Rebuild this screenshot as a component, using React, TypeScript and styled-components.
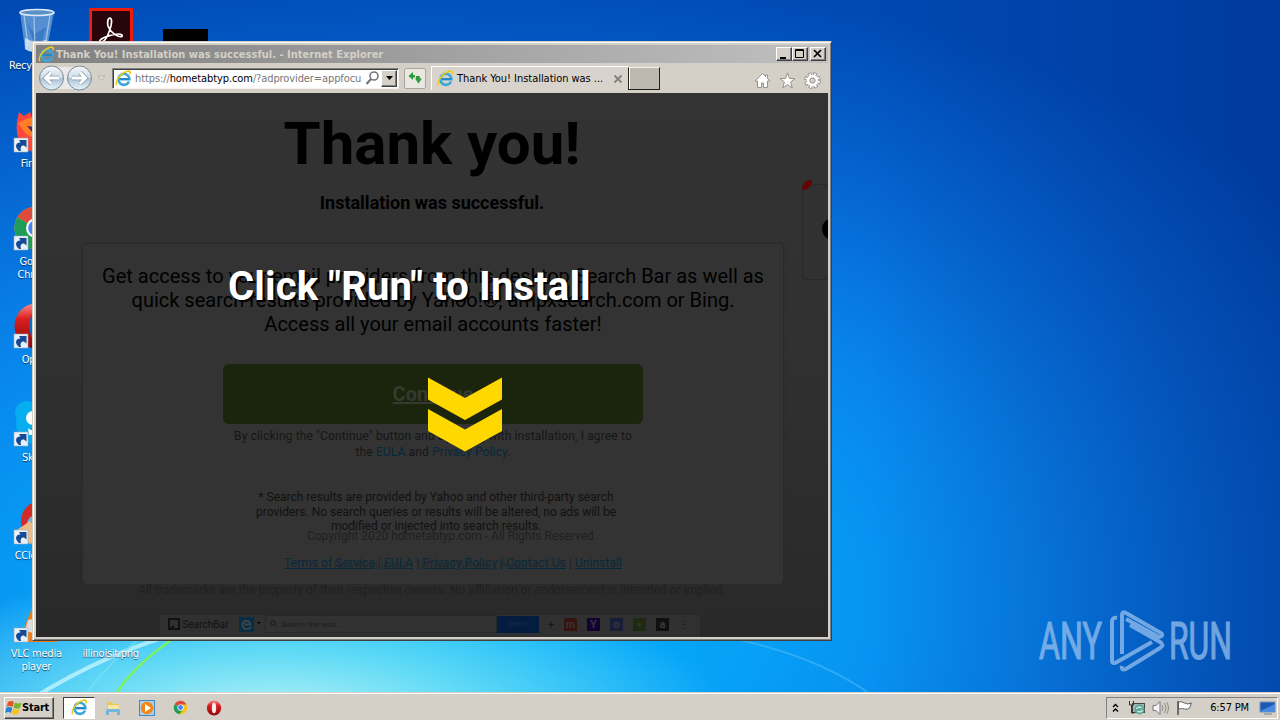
import React from 'react';
import styled, { createGlobalStyle } from 'styled-components';

const GlobalStyle = createGlobalStyle`
    * { box-sizing: border-box; }
    body { margin: 0; overflow: hidden; }
`;

const uiFont = '"DejaVu Sans Condensed", "DejaVu Sans", sans-serif';

const Desktop = styled.div`
    position: relative;
    display: flex;
    flex-direction: column;
    width: 1280px;
    height: 720px;
    overflow: hidden;
    font-family: ${uiFont};
    font-size: 11px;
    background:
        radial-gradient(ellipse 460px 150px at 270px 720px, rgba(200, 250, 245, 0.95) 0%, rgba(120, 230, 245, 0.8) 45%, rgba(0, 160, 250, 0) 100%),
        linear-gradient(90deg, rgba(0, 40, 130, 0) 68%, rgba(0, 40, 130, 0.2) 84%, rgba(0, 40, 130, 0.42) 100%),
        radial-gradient(ellipse 1150px 660px at 420px 600px, #00b4fc 0%, #06a2f8 28%, #0884ea 52%, #0564d0 74%, #0048b2 98%);
`;

const Wallpaper = styled.svg`
    position: absolute;
    left: 0;
    top: 0;
`;

const IconGrid = styled.div`
    position: relative;
    display: grid;
    flex: 1;
    grid-template-columns: repeat(3, 74.5px);
    grid-auto-rows: 98px;
    margin-left: -1px;
`;

const Shortcut = styled.div<{ col: number; row: number }>`
    grid-column: ${p => p.col};
    grid-row: ${p => p.row};
    display: flex;
    flex-direction: column;
    align-items: center;
    padding-top: 8px;
    color: #fff;
    line-height: 13px;
    letter-spacing: -0.25px;
    text-align: center;
    text-shadow: 0 1px 1px rgba(0, 20, 60, 0.7);
    svg { flex: none; margin-bottom: 3px; }
    span { width: 66px; }
`;

const Window = styled.div`
    position: absolute;
    left: 32px;
    top: 41px;
    width: 800px;
    height: 600px;
    display: flex;
    flex-direction: column;
    padding: 3px;
    background: #d4d0c8;
    border: 1px solid;
    border-color: #d4d0c8 #404040 #404040 #d4d0c8;
    box-shadow: inset 1px 1px #fff, inset -1px -1px #808080;
`;

const TitleBar = styled.div`
    display: flex;
    align-items: center;
    flex: none;
    height: 18px;
    padding: 0 2px;
    color: #d4d0c8;
    font-weight: bold;
    background: linear-gradient(90deg, #808080, #c0c0c0);
`;

const TitleText = styled.span`
    flex: 1;
    margin-left: 1px;
    font-size: 11px;
    letter-spacing: 0.02px;
    white-space: nowrap;
`;

const CaptionButton = styled.div<{ gap?: number }>`
    width: 16px;
    height: 14px;
    margin-left: ${p => p.gap || 0}px;
    background: #d4d0c8;
    border: 1px solid;
    border-color: #fff #404040 #404040 #fff;
    box-shadow: inset -1px -1px #808080;
    svg { display: block; }
`;

const NavBar = styled.div`
    display: flex;
    align-items: center;
    flex: none;
    height: 30px;
    padding: 0 7px 0 2px;
    background: #d4d0c8;
`;

const AddressBox = styled.div`
    display: flex;
    align-items: center;
    width: 287px;
    height: 21px;
    margin-left: 2px;
    padding: 1px 1px 1px 2px;
    background: #fff;
    border: 1px solid;
    border-color: #808080 #f4f2ee #f4f2ee #808080;
    box-shadow: inset 1px 1px #404040;
`;

const Address = styled.span`
    width: 230px;
    margin-left: 3px;
    color: #777;
    letter-spacing: -0.1px;
    white-space: nowrap;
    overflow: hidden;
    b { color: #000; font-weight: normal; }
`;

const DropButton = styled.div`
    display: flex;
    align-items: center;
    justify-content: center;
    width: 16px;
    height: 17px;
    margin-left: auto;
    background: #d4d0c8;
    border: 1px solid;
    border-color: #fff #404040 #404040 #fff;
    box-shadow: inset -1px -1px #808080;
`;

const RefreshButton = styled.div`
    display: flex;
    align-items: center;
    justify-content: center;
    width: 22px;
    height: 21px;
    margin-left: 5px;
    background: #e9e7e2;
    border: 1px solid #a9a69f;
    border-radius: 2px;
`;

const Tab = styled.div`
    display: flex;
    align-items: center;
    width: 197px;
    height: 24px;
    margin-left: 5px;
    padding-left: 5px;
    color: #000;
    border-left: 1px solid #fff;
    border-top: 1px solid #fff;
    background: #d8d4cd;
    span { flex: 1; margin-left: 3px; letter-spacing: -0.04px; white-space: nowrap; }
    svg:last-child { margin-right: 5px; }
`;

const NewTab = styled.div`
    width: 32px;
    height: 23px;
    margin-right: auto;
    background: #bdb9b1;
    border: 1px solid;
    border-color: #f4f2ee #202020 #202020 #202020;
    box-shadow: inset 1px 0 #fff;
`;

const Tools = styled.div`
    display: flex;
    gap: 8px;
    margin-top: 4px;
`;

const Page = styled.div`
    position: relative;
    flex: 1;
    display: flex;
    flex-direction: column;
    align-items: center;
    overflow: hidden;
    color: #000;
    font-family: Roboto, sans-serif;
    text-align: center;
    background: linear-gradient(#333 0%, #303030 50%, #292929 100%);
`;

const Heading = styled.h1`
    margin: 16px 0 0;
    font-size: 60px;
    line-height: 70px;
`;

const SubHeading = styled.h2`
    margin: 13px 0 0;
    font-size: 18px;
    line-height: 22px;
`;

const Card = styled.section`
    display: flex;
    flex-direction: column;
    align-items: center;
    flex: none;
    width: 702px;
    height: 342px;
    margin: 29px 0 0 2px;
    padding-top: 20px;
    background: #333;
    border: 1px solid #2a2a2a;
    border-radius: 5px;
    box-shadow: 0 0 2px #2a2a2a;
`;

const Lead = styled.p`
    margin: 0;
    font-size: 20px;
    line-height: 24px;
    white-space: nowrap;
`;

const ContinueButton = styled.div`
    width: 420px;
    height: 60px;
    margin-top: 28px;
    border-radius: 6px;
    color: #353a30;
    font-size: 20px;
    font-weight: bold;
    line-height: 60px;
    text-decoration: underline;
    background: #1b240c;
`;

const Agreement = styled.p`
    margin: 4px 0 0;
    color: #161616;
    font-size: 12px;
    line-height: 16px;
    letter-spacing: 0.14px;
    a { color: #06283c; }
`;

const Disclaimer = styled.p`
    margin: 30px 0 0 6px;
    color: #111;
    font-size: 12px;
    line-height: 14.5px;
`;

const Copyright = styled.p`
    margin: -5px 0 0 38px;
    color: #202020;
    font-size: 12px;
    line-height: 14px;
`;

const Links = styled.div`
    position: relative;
    margin: 13px 0 0 40px;
    color: #222;
    font-size: 12px;
    line-height: 14px;
    letter-spacing: 0.07px;
    white-space: pre;
    a { color: #06283c; text-decoration: underline; }
`;

const LinksBehind = styled.span`
    position: absolute;
    left: 50px;
    top: 3px;
    color: #1d2c32;
    font-size: 10px;
`;

const Trademarks = styled.p`
    margin: -2px 0 0;
    color: #202020;
    font-size: 12px;
    line-height: 14px;
    white-space: nowrap;
`;

const SearchBar = styled.div`
    display: flex;
    align-items: center;
    flex: none;
    width: 542px;
    height: 24px;
    margin: 17px 5px 0 0;
    padding: 0 4px 4px 8px;
    color: #111;
    font-size: 10px;
    background: #303030;
    border: 1px solid #272727;
`;

const SearchField = styled.div`
    display: flex;
    align-items: center;
    gap: 3px;
    width: 232px;
    height: 18px;
    margin-left: 3px;
    padding-left: 4px;
    color: #1c1c1c;
    font-size: 8px;
    background: #323232;
    border: 1px solid #282828;
`;

const SearchButton = styled.div`
    width: 42px;
    height: 17px;
    color: #1b2b4d;
    font-size: 7px;
    line-height: 16px;
    background: #031c3f;
`;

const MiniIcons = styled.div`
    display: flex;
    align-items: center;
    gap: 10px;
    margin-left: 9px;
`;

const MiniIcon = styled.span<{ bg: string; fg: string }>`
    width: 13px;
    height: 13px;
    color: ${p => p.fg};
    background: ${p => p.bg};
    font-size: 11px;
    font-weight: bold;
    line-height: 13px;
`;

const SideCard = styled.div`
    position: absolute;
    left: 766px;
    top: 91px;
    width: 60px;
    height: 96px;
    background: #313131;
    border: 1px solid #292929;
    border-radius: 4px;
    svg { position: absolute; left: -2px; top: -7px; }
`;

const Prompt = styled.div`
    position: absolute;
    left: 192px;
    top: 170px;
    color: #fff;
    font-size: 40px;
    font-weight: bold;
    line-height: 48px;
    letter-spacing: 0.13px;
    white-space: nowrap;
    text-shadow: 2px 2px 1px #000;
`;

const Chevrons = styled.svg`
    position: absolute;
    left: 391px;
    top: 284px;
`;

const Taskbar = styled.div`
    position: relative;
    display: flex;
    align-items: center;
    flex: none;
    height: 28px;
    padding: 3px 2px 1px 4px;
    color: #000;
    background: #d4d0c8;
    border-top: 1px solid #d4d0c8;
    box-shadow: inset 0 1px #fff;
`;

const StartButton = styled.div`
    display: flex;
    align-items: center;
    width: 50px;
    height: 22px;
    font-weight: bold;
    letter-spacing: -0.2px;
    border: 1px solid;
    border-color: #fff #404040 #404040 #fff;
    box-shadow: inset -1px -1px #808080;
`;

const TaskButton = styled.div<{ active?: boolean }>`
    display: flex;
    align-items: center;
    justify-content: center;
    width: ${p => (p.active ? 32 : 33.7)}px;
    height: 22px;
    margin-left: ${p => (p.active ? 9 : 0)}px;
    ${p => p.active && `
        background: #fff;
        border: 1px solid;
        border-color: #404040 #fff #fff #404040;
        margin-right: 1px;
    `}
`;

const Tray = styled.div`
    display: flex;
    align-items: center;
    width: 172px;
    height: 22px;
    margin-left: auto;
    padding: 0 1px 0 5px;
    border: 1px solid;
    border-color: #808080 #fff #fff #808080;
    span { margin: 0 10px 0 auto; letter-spacing: -0.15px; white-space: nowrap; }
`;

const Watermark = styled.svg`
    position: absolute;
    left: 1020px;
    top: 590px;
`;

const ArrowBadge = () => (
    <g>
        <rect x="2" y="32" width="14" height="14" fill="#e8f0f8" stroke="#9ab" strokeWidth=".6" />
        <path d="M7 45C2 41 4 36 8.500 36.500L7 34h7.500v7.500L12 39.500c-3 0-4 2-3 5.500z" fill="#174a94" />
    </g>
);

const IeIcon = ({ size = 16 }: { size?: number }) => (
    <svg width={size} height={size} viewBox="0 0 16 16">
        <path d="M13.200 10.800A5.200 5.200 0 1 1 13.600 8.700H4.500" fill="none" stroke="#3ba6dc" strokeWidth="2.400" />
        <path d="M4.500 8.500h8.800" stroke="#2387c8" strokeWidth="1.800" />
        <path d="M1.700 14.300C-.5 11 5 3 11.500 1.200c2.800-.6 3.400.8 2.500 2.800" fill="none" stroke="#ecc91d" strokeWidth="1.500" />
    </svg>
);

const ChromeIcon = ({ size, badge }: { size: number; badge?: boolean }) => (
    <svg width={size} height={size} viewBox="0 0 48 48">
        <circle cx="24" cy="24" r="21.500" fill="#fbc116" />
        <path d="M24 24 5.400 13.200A21.500 21.500 0 0 1 42.600 13.200L43 14H24z" fill="#dd4b3e" />
        <path d="M24 24 5.400 13.200A21.500 21.500 0 0 0 21 45.300L32.600 29z" fill="#1f9d58" />
        <circle cx="24" cy="24" r="10" fill="#fff" />
        <circle cx="24" cy="24" r="7.800" fill="#4285f4" />
        {badge && <ArrowBadge />}
    </svg>
);

const OperaIcon = ({ size, badge }: { size: number; badge?: boolean }) => (
    <svg width={size} height={size} viewBox="0 0 48 48">
        <defs>
            <linearGradient id="opera" x2="0" y2="1">
                <stop stopColor="#f88" />
                <stop offset=".35" stopColor="#d81e1e" />
                <stop offset="1" stopColor="#8e0808" />
            </linearGradient>
        </defs>
        <ellipse cx="24" cy="24" rx="21.500" ry="22.500" fill="url(#opera)" />
        <ellipse cx="24" cy="24" rx="6.500" ry="16" fill={badge ? '#0a6ec8' : '#f4eeee'} />
        {badge && <ArrowBadge />}
    </svg>
);

const DesktopIcons = () => (
    <IconGrid>
        <Shortcut col={1} row={1}>
            <svg width="48" height="48" viewBox="0 0 48 48">
                <path d="M8 4 13 41c5 4 17 4 22 0L42 4z" fill="#9cc5ea" opacity=".55" />
                <path d="m15 15 8 11 11-7-4 17-9-4z" fill="#2c6fbe" opacity=".6" />
                <path d="M13 30 22 34l13-2-1 9c-5 4-16 4-21 0z" fill="#d6e4ee" opacity=".85" />
                <path d="m12 7 4 31M22 9l1 31M38 7l-5 32" stroke="#d8ecfb" strokeWidth="1.200" opacity=".6" />
                <ellipse cx="25" cy="4.500" rx="17" ry="3" fill="#5b8fc8" stroke="#d9e8f4" strokeWidth="1.600" />
            </svg>
            <span>Recycle Bin</span>
        </Shortcut>
        <Shortcut col={2} row={1}>
            <svg width="48" height="48" viewBox="0 0 48 48">
                <rect x="3.500" y="1.500" width="41" height="45" fill="#27050a" stroke="#ee1c0c" strokeWidth="3" />
                <path d="M13 34c-3-4 19-10 22-7 2 4-10 1-14-9-1-4 0-8 2-8 5 1-3 23-8 24-1 0-2 0-2 0z" fill="none" stroke="#fff" strokeWidth="1.700" />
            </svg>
        </Shortcut>
        <Shortcut col={3} row={1}>
            <svg width="48" height="48" viewBox="0 0 48 48">
                <rect x="2" y="21" width="45" height="26" />
            </svg>
        </Shortcut>
        <Shortcut col={1} row={2}>
            <svg width="48" height="48" viewBox="0 0 48 48">
                <path d="M5 15 7 6l5 4 6-4 2 5c14-5 25 4 25 15 0 13-10 21-22 20C9 45 3 31 5 15z" fill="#ff453c" />
                <path d="m6 17 8-4 8-2 4 9-6 11-6-3z" fill="#ff7f26" />
                <path d="m15 20 7 1-2 5z" fill="#522071" />
                <ArrowBadge />
            </svg>
            <span>Firefox</span>
        </Shortcut>
        <Shortcut col={1} row={3}>
            <ChromeIcon size={48} badge />
            <span>Google Chrome</span>
        </Shortcut>
        <Shortcut col={1} row={4}>
            <OperaIcon size={48} badge />
            <span>Opera</span>
        </Shortcut>
        <Shortcut col={1} row={5}>
            <svg width="48" height="48" viewBox="0 0 48 48">
                <circle cx="24" cy="24" r="20" fill="#06aef0" />
                <circle cx="15" cy="13" r="12" fill="#06aef0" />
                <circle cx="21" cy="18" r="7" fill="#fff" />
                <path d="M16 28c3 3 8 2 8 7H17z" fill="#fff" />
                <ArrowBadge />
            </svg>
            <span>Skype</span>
        </Shortcut>
        <Shortcut col={1} row={6}>
            <svg width="48" height="48" viewBox="0 0 48 48">
                <circle cx="29" cy="23" r="20" fill="#d32b27" />
                <circle cx="24" cy="26" r="9" fill="#71aedb" />
                <path d="m2 34 16-11 13 18-13 5z" fill="#edba87" />
                <ArrowBadge />
            </svg>
            <span>CCleaner</span>
        </Shortcut>
        <Shortcut col={1} row={7}>
            <svg width="48" height="48" viewBox="0 0 48 48">
                <path d="m24 2 12 34h10v10H10l1-11z" fill="#f47b13" />
                <path d="m16 24-3 11 8 2V23z" fill="#ddd" />
                <ArrowBadge />
            </svg>
            <span>VLC media player</span>
        </Shortcut>
        <Shortcut col={2} row={7}>
            <svg width="48" height="48" />
            <span>illinoisit.png</span>
        </Shortcut>
    </IconGrid>
);

const NavButtons = () => (
    <svg width="72" height="28" viewBox="0 0 72 28">
        <defs>
            <linearGradient id="orb" x2="0" y2="1">
                <stop stopColor="#f5f8fa" />
                <stop offset=".48" stopColor="#d0dde8" />
                <stop offset=".5" stopColor="#a9c1d5" />
                <stop offset="1" stopColor="#e8f6fc" />
            </linearGradient>
        </defs>
        <rect x="13" y="3" width="28" height="22" fill="#e9e9e7" />
        <circle cx="13.500" cy="14" r="12" fill="url(#orb)" stroke="#7d8b98" />
        <circle cx="41.500" cy="14" r="12" fill="url(#orb)" stroke="#7d8b98" />
        <path d="M21 14H8m5-5.500L7.500 14l5.500 5.500M34 14h13m-5-5.500 5.500 5.500-5.500 5.500" fill="none" stroke="#8799aa" strokeWidth="4.500" />
        <path d="M21 14H8m5-5.500L7.500 14l5.500 5.500M34 14h13m-5-5.500 5.500 5.500-5.500 5.500" fill="none" stroke="#fff" strokeWidth="3" />
        <path d="M60 12h7l-3.500 4z" fill="#e6e4df" stroke="#aaa69e" strokeWidth=".8" />
    </svg>
);

const BrowserChrome = () => (
    <>
        <TitleBar>
            <IeIcon size={17} />
            <TitleText>Thank You! Installation was successful. - Internet Explorer</TitleText>
            <CaptionButton>
                <svg width="14" height="12"><path d="M3 9h6v2H3z" /></svg>
            </CaptionButton>
            <CaptionButton>
                <svg width="14" height="12"><path d="M2.500 1.500h8v8h-8zM2 2.500h9" fill="none" stroke="#000" /></svg>
            </CaptionButton>
            <CaptionButton gap={2}>
                <svg width="14" height="12"><path d="m3 2 7 7m0-7-7 7" stroke="#000" strokeWidth="1.700" /></svg>
            </CaptionButton>
        </TitleBar>
        <NavBar>
            <NavButtons />
            <AddressBox>
                <IeIcon size={17} />
                <Address>https://<b>hometabtyp.com</b>/?adprovider=appfocu</Address>
                <svg width="15" height="16" viewBox="0 0 15 16">
                    <circle cx="9" cy="6" r="4" fill="none" stroke="#777" strokeWidth="1.600" />
                    <path d="m6 9-4.500 5" stroke="#777" strokeWidth="2.200" />
                </svg>
                <DropButton>
                    <svg width="7" height="4"><path d="M0 0h7L3.500 4z" /></svg>
                </DropButton>
            </AddressBox>
            <RefreshButton>
                <svg width="16" height="16" viewBox="0 0 16 16" fill="#2f9a3c" style={{ flex: 'none' }}>
                    <path d="M6 2 1.500 6 6 10V7.500h2V5H6z" />
                    <path d="m11.500 13.500 3.500-5h-2.200V6H9v2.500H8z" />
                </svg>
            </RefreshButton>
            <Tab>
                <IeIcon size={17} />
                <span>Thank You! Installation was ...</span>
                <svg width="10" height="10"><path d="m1.500 1.500 7 7m0-7-7 7" stroke="#85817a" strokeWidth="1.800" /></svg>
            </Tab>
            <NewTab />
            <Tools>
                <svg width="17" height="17" viewBox="0 0 17 17">
                    <path d="M8.500 1.500 1 9h2.500v6.500h4V11h2v4.500h4V9H16l-2.500-2.500V3h-2v1.500z" fill="#fff" stroke="#96928b" />
                </svg>
                <svg width="17" height="17" viewBox="0 0 17 17">
                    <path d="m8.500 1 2 5.500H16l-4.400 3.500L13.300 16l-4.800-3.500L3.700 16l1.700-6L1 6.500h5.500z" fill="#fff" stroke="#96928b" />
                </svg>
                <svg width="17" height="17" viewBox="0 0 17 17">
                    <circle cx="8.500" cy="8.500" r="6.400" fill="none" stroke="#85817a" strokeWidth="3.600" strokeDasharray="3.300 1.726" />
                    <circle cx="8.500" cy="8.500" r="6.200" fill="none" stroke="#fff" strokeWidth="2.600" strokeDasharray="2 2.870" strokeDashoffset="-.6" />
                    <circle cx="8.500" cy="8.500" r="4.200" fill="none" stroke="#fff" strokeWidth="2.600" />
                    <circle cx="8.500" cy="8.500" r="2.600" fill="#d4d0c8" stroke="#85817a" strokeWidth=".8" />
                </svg>
            </Tools>
        </NavBar>
    </>
);

const miniIcons = [
    { text: 'm', bg: '#35130e', fg: '#3d3030' },
    { text: 'Y', bg: '#100330', fg: '#363041' },
    { text: 'o', bg: '#181d38', fg: '#34373f' },
    { text: '▪', bg: '#1f2913', fg: '#353a2f' },
    { text: 'a', bg: '#101010', fg: '#393939' },
];

const InstallPage = () => (
    <Page>
        <Heading>Thank you!</Heading>
        <SubHeading>Installation was successful.</SubHeading>
        <Card>
            <Lead>
                Get access to your email providers from this desktop Search Bar as well as<br />
                quick search results provided by Yahoo!®, ampxsearch.com or Bing.<br />
                Access all your email accounts faster!
            </Lead>
            <ContinueButton>Continue</ContinueButton>
            <Agreement>
                By clicking the "Continue" button and agreeing with installation, I agree to<br />
                the <a>EULA</a> and <a>Privacy Policy</a>.
            </Agreement>
            <Disclaimer>
                * Search results are provided by Yahoo and other third-party search<br />
                providers. No search queries or results will be altered, no ads will be<br />
                modified or injected into search results.
            </Disclaimer>
            <Copyright>Copyright 2020 hometabtyp.com - All Rights Reserved.</Copyright>
            <Links>
                <LinksBehind>How to Uninstall | Terms of Service | Policy</LinksBehind>
                <a>Terms of Service</a> | <a>EULA</a> | <a>Privacy Policy</a> | <a>Contact Us</a> | <a>Uninstall</a>
            </Links>
        </Card>
        <Trademarks>
            All trademarks are the property of their respective owners. No affiliation or endorsement is intended or implied.
        </Trademarks>
        <SearchBar>
            <svg width="12" height="12"><path d="M1 1h10v10H1z" fill="#303030" stroke="#111" strokeWidth="2" /><path d="m2 10 4-3v4z" fill="#111" /></svg>
            <span style={{ marginLeft: 3, marginRight: 11 }}>SearchBar</span>
            <svg width="15" height="15" viewBox="0 0 16 16">
                <rect width="16" height="16" fill="#092d42" />
                <path d="M13 11c-7 5-10-1-9-4 2-5 8-3 8 1H6" fill="none" stroke="#3a464b" strokeWidth="2" />
            </svg>
            <svg width="8" height="4"><path d="M3 0h4L5 2z" /></svg>
            <SearchField>
                <svg width="8" height="8"><circle cx="3" cy="3" r="2.200" fill="none" stroke="#181818" /><path d="m5 5 2.500 2.500" stroke="#181818" /></svg>
                Search the web...
            </SearchField>
            <SearchButton>Search</SearchButton>
            <MiniIcons>
                <span>+</span>
                {miniIcons.map(i => <MiniIcon key={i.text} bg={i.bg} fg={i.fg}>{i.text}</MiniIcon>)}
                <span>⋮</span>
            </MiniIcons>
        </SearchBar>
        <SideCard>
            <svg width="34" height="70">
                <path d="M1.500 12C0 6 5 2 11 2c0 6-4 10-9.500 10z" fill="#650303" />
                <circle cx="32" cy="51" r="11" />
            </svg>
        </SideCard>
        <Prompt>Click "Run" to Install</Prompt>
        <Chevrons width="76" height="76" viewBox="0 0 76 76" fill="#ffd800">
            <path d="m1 .5 37 20.500L75 .5v22L38 43 1 22.500z" />
            <path d="m1 32 37 20.500L75 32v22L38 74.500 1 54z" />
        </Chevrons>
    </Page>
);

const WindowsFlag = () => (
    <svg width="17" height="16" viewBox="0 0 17 16">
        <path d="M3 2c2-1.500 4-1.500 6 0L7.500 7C5.500 5.500 3.500 6 1.500 7z" fill="#e9532b" />
        <path d="M10 2.500c2 1.200 4 1.200 6.500.2L15 8c-2.200 1-4.300.8-6.500-.5z" fill="#76b82d" />
        <path d="M1.200 8c2-1.200 4-1.200 6 0L6 13c-2-1.500-4-1-6 0z" fill="#2c82d2" />
        <path d="M8.200 8.500c2 1.300 4 1.500 6.500.5L13 14c-2.200 1-4.200.8-6.300-.5z" fill="#f7c21e" />
    </svg>
);

const BottomBar = () => (
    <Taskbar>
        <StartButton><WindowsFlag />Start</StartButton>
        <TaskButton active><IeIcon size={17} /></TaskButton>
        <TaskButton>
            <svg width="16" height="16" viewBox="0 0 16 16">
                <path d="M2 2h5l1 2h6v8H2z" fill="#e8c65a" />
                <path d="M3 5h11v7H3z" fill="#f8e6a0" />
                <path d="M1 15v-4q0-2 2-2h10q2 0 2 2v4h-3v-3H4v3z" fill="#73b7dc" />
            </svg>
        </TaskButton>
        <TaskButton>
            <svg width="16" height="16" viewBox="0 0 16 16">
                <rect x=".5" y=".5" width="15" height="15" fill="#a8d2f0" stroke="#4089c6" />
                <circle cx="8" cy="8" r="6.200" fill="#f58410" />
                <path d="m6 4 6 4-6 4z" fill="#fff" />
            </svg>
        </TaskButton>
        <TaskButton><ChromeIcon size={15} /></TaskButton>
        <TaskButton><OperaIcon size={16} /></TaskButton>
        <Tray>
            <svg width="7" height="10" viewBox="0 0 7 10"><path d="m1 4 2.500-2.500L6 4M1 8.500 3.500 6 6 8.500" fill="none" stroke="#000" strokeWidth="1.400" /></svg>
            <svg width="17" height="16" viewBox="0 0 17 16" style={{ marginLeft: 9 }}>
                <rect x="4.500" y="3.500" width="12" height="9" fill="#a2b4b0" stroke="#444" />
                <path d="M1.500 1v4h4V1M3.500 5v8h3" fill="none" stroke="#333" />
                <circle cx="11.500" cy="9.500" r="5" fill="#5aa895" />
                <path d="M8.500 9a3 3 0 0 1 5-1m1 2a3 3 0 0 1-5 1" fill="none" stroke="#d8f4e8" strokeWidth="1.200" />
            </svg>
            <svg width="17" height="16" viewBox="0 0 17 16" fill="#f4f4f4" stroke="#777" style={{ marginLeft: 7 }}>
                <path d="M1 5.500h3l4-4v13l-4-4H1z" />
                <path d="M10 5q2 3 0 6M12 3q4 5 0 10M14.500 2q4 6 0 12" fill="none" strokeWidth=".8" />
            </svg>
            <svg width="17" height="16" viewBox="0 0 17 16" style={{ marginLeft: 7 }}>
                <path d="M2.500 2q3-1 6 1t7 0l-2 5q-2 2-5 1t-6 0z" fill="#fff" stroke="#666" />
                <path d="M2 1v14" stroke="#555" strokeWidth="1.600" />
            </svg>
            <span>6:57 PM</span>
            <svg width="17" height="14" viewBox="0 0 17 14">
                <path d="M1 1h15v10H1z" fill="#1c59b5" stroke="#7491b4" />
                <path d="M1 10 16 3v8H1z" fill="#4a8bdc" />
                <path d="M5 13h8" stroke="#788" />
            </svg>
        </Tray>
    </Taskbar>
);

const App = () => (
    <Desktop>
        <GlobalStyle />
        <Wallpaper width="1280" height="720" fill="none">
            <path d="M30 700Q110 650 190 630" stroke="#c8f6ff" strokeWidth="4" opacity=".75" />
            <path d="M82 700Q105 665 150 630" stroke="#78dcf8" strokeWidth="2" opacity=".8" />
            <path d="M112 700Q135 660 195 625" stroke="#7df25b" strokeWidth="2.500" />
            <path d="M740 640q80 18 130 54" stroke="#59bdf8" strokeWidth="2" opacity=".5" />
        </Wallpaper>
        <DesktopIcons />
        <Window>
            <BrowserChrome />
            <InstallPage />
        </Window>
        <Watermark width="240" height="100" fill="#9cc4ef" opacity=".72">
            <g fontFamily="Roboto, sans-serif" fontSize="51" stroke="#9cc4ef" strokeWidth="1.200">
                <text x="19" y="69" textLength="63" lengthAdjust="spacingAndGlyphs">ANY</text>
                <text x="149" y="69" textLength="63" lengthAdjust="spacingAndGlyphs">RUN</text>
            </g>
            <path d="M97 28q-5-1-5 4v38q0 5 5 2l35-20M102 64V25q0-4 4-2l35 20q3 3-2 4l-33-18M102 76q-1 5 4 3l34-21q5-3 0-6l-30-17" fill="none" stroke="#9cc4ef" strokeWidth="4" />
        </Watermark>
        <BottomBar />
    </Desktop>
);

export default App;
